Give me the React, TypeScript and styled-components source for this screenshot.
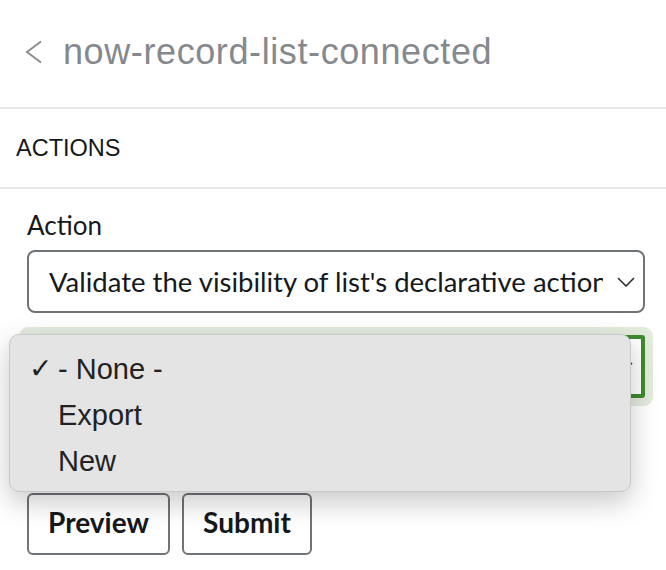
import React from "react";
import styled, { createGlobalStyle } from "styled-components";

const Global = createGlobalStyle`
  html, body { margin: 0; padding: 0; background: #ffffff; }
  body { font-family: "Liberation Sans", Arial, sans-serif; }
  * { box-sizing: border-box; }
`;

const Page = styled.div`
  width: 666px;
  height: 570px;
  overflow: hidden;
  position: relative;
  background: #fff;
`;

const Header = styled.header`
  height: 109px;
  display: flex;
  align-items: center;
  gap: 20px;
  padding: 0 0 4px 25px;
  border-bottom: 2px solid #e6e6e6;
`;

const Title = styled.h1`
  margin: 0;
  font-family: "Liberation Sans", Arial, sans-serif;
  font-weight: 400;
  font-size: 36px;
  letter-spacing: 0.6px;
  color: #85898e;
`;

const SectionHeader = styled.div`
  height: 80px;
  display: flex;
  align-items: center;
  padding: 0 0 0 16px;
  border-bottom: 2px solid #e6e6e6;
  font-family: "Liberation Sans", Arial, sans-serif;
  font-size: 23.5px;
  color: #16191c;
`;

const Form = styled.div`
  padding: 21px 21px 0 27px;
  display: flex;
  flex-direction: column;
`;

const Label = styled.label`
  font-family: Lato, "Open Sans", sans-serif;
  font-size: 26px;
  line-height: 30px;
  color: #16191c;
  margin-bottom: 10px;
`;

const SelectBox = styled.div<{ $focused?: boolean }>`
  position: relative;
  height: 63px;
  display: flex;
  align-items: center;
  padding: 0 8px 0 ${(p) => (p.$focused ? "19px" : "20px")};
  border: ${(p) => (p.$focused ? "4px solid #3f8a30" : "2px solid #6f7479")};
  border-radius: ${(p) => (p.$focused ? "3px" : "8px")};
  background: #fff;
  box-shadow: ${(p) => (p.$focused ? "0 0 0 8px #e3ebdd" : "none")};
  font-family: Lato, "Open Sans", sans-serif;
  font-size: 27.5px;
  color: #16191c;
`;

const SecondField = styled.div`
  position: relative;
  margin-top: 22px;
`;

const SelectText = styled.span`
  flex: 1;
  overflow: hidden;
  white-space: nowrap;
`;

const Chevron = styled.svg`
  flex: none;
  margin-left: 14px;
`;

const Menu = styled.ul`
  position: absolute;
  left: -18px;
  top: -1px;
  width: 622px;
  height: 158px;
  margin: 0;
  padding: 11px 0 0 0;
  list-style: none;
  background: #e4e4e4;
  border: 1px solid #c9c9c9;
  border-radius: 10px;
  box-shadow: 0 10px 28px rgba(0, 0, 0, 0.22);
  z-index: 2;
`;

const MenuItem = styled.li`
  position: relative;
  height: 46px;
  line-height: 46px;
  padding-left: 48px;
  font-family: "Liberation Sans", Arial, sans-serif;
  font-size: 29px;
  color: #222;
`;

const Check = styled.span`
  position: absolute;
  left: 19px;
  top: 0;
  font-family: "DejaVu Sans", sans-serif;
  font-weight: 700;
  font-size: 28px;
`;

const ButtonRow = styled.div`
  display: flex;
  gap: 12px;
  margin-top: 95px;
`;

const Button = styled.button<{ $w: number }>`
  width: ${(p) => p.$w}px;
  height: 62px;
  border: 2px solid #6f7479;
  border-radius: 6px;
  background: #fff;
  font-family: Lato, "Open Sans", sans-serif;
  font-weight: 700;
  font-size: 28px;
  line-height: 1;
  color: #16191c;
  padding: 0 0 4px 0;
`;

const Down = () => (
  <Chevron width="18" height="10" viewBox="0 0 18 10">
    <polyline points="1,1 9,9 17,1" fill="none" stroke="#2b2f33" strokeWidth="1.6" />
  </Chevron>
);

export default function App() {
  return (
    <Page>
      <Global />
      <Header>
        <svg width="18" height="24" viewBox="0 0 18 24">
          <polyline points="16,1.5 2,12 16,22.5" fill="none" stroke="#8a8e92" strokeWidth="2" />
        </svg>
        <Title>now-record-list-connected</Title>
      </Header>
      <SectionHeader>ACTIONS</SectionHeader>
      <Form>
        <Label>Action</Label>
        <SelectBox>
          <SelectText>Validate the visibility of list's declarative actions</SelectText>
          <Down />
        </SelectBox>
        <SecondField>
          <SelectBox $focused>
            <SelectText />
            <Down />
          </SelectBox>
          <Menu>
            <MenuItem>
              <Check>✓</Check>- None -
            </MenuItem>
            <MenuItem>Export</MenuItem>
            <MenuItem>New</MenuItem>
          </Menu>
        </SecondField>
        <ButtonRow>
          <Button $w={143}>Preview</Button>
          <Button $w={130}>Submit</Button>
        </ButtonRow>
      </Form>
    </Page>
  );
}
